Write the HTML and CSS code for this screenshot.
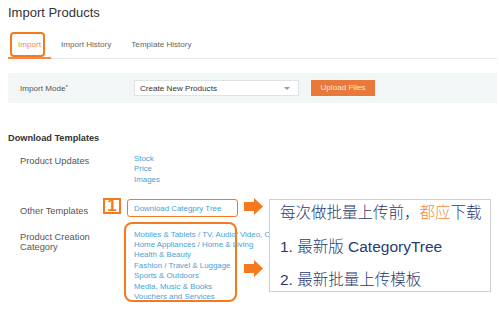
FILE: index.html
```html
<!DOCTYPE html>
<html lang="en">
<head>
  <meta charset="UTF-8">
  <meta name="viewport" content="width=device-width, initial-scale=1.0">
  <title>Import Products</title>
  <link rel="stylesheet" href="styles.css">
</head>
<body>

  <h1>Import Products</h1>

  <div class="tabs">
    <div class="tab active">Import</div>
    <div class="tab">Import History</div>
    <div class="tab">Template History</div>
  </div>

  <div class="mode-panel">
    <div class="mode-label">Import Mode<sup>*</sup></div>
    <div class="select">
      <span>Create New Products</span>
      <span class="caret"></span>
    </div>
    <div class="btn-upload">Upload Files</div>
  </div>

  <h2>Download Templates</h2>

  <div class="tpl-row">
    <div class="tpl-label">Product Updates</div>
    <div class="tpl-links">
      <a href="#">Stock</a>
      <a href="#">Price</a>
      <a href="#">Images</a>
    </div>
  </div>

  <div class="tpl-row">
    <div class="tpl-label">Other Templates</div>
    <div class="tpl-links">
      <a href="#">Download Categpry Tree</a>
    </div>
  </div>

  <div class="tpl-row category">
    <div class="tpl-label">Product Creation<br>Category</div>
    <div class="tpl-links">
      <a href="#">Mobiles &amp; Tablets / TV, Audio/ Video, Cameras</a>
      <a href="#">Home Appliances / Home &amp; Living</a>
      <a href="#">Health &amp; Beauty</a>
      <a href="#">Fashion / Travel &amp; Luggage</a>
      <a href="#">Sports &amp; Outdoors</a>
      <a href="#">Media, Music &amp; Books</a>
      <a href="#">Vouchers and Services</a>
    </div>
  </div>

  <!-- Markierungen -->
  <div class="mark mark-tab"></div>
  <div class="mark mark-num">1</div>
  <div class="mark mark-tree"></div>
  <div class="mark mark-list"></div>

  <svg class="arrow arrow-1" viewBox="0 0 19 17"><polygon points="0,4 10,4 10,0 19,8.5 10,17 10,13 0,13" fill="#f47a20"/></svg>
  <svg class="arrow arrow-2" viewBox="0 0 19 17"><polygon points="0,4 10,4 10,0 19,8.5 10,17 10,13 0,13" fill="#f47a20"/></svg>

  <div class="note">
    <div>每次做批量上传前，<span class="hl">都应</span>下载</div>
    <div>1. 最新版 CategoryTree</div>
    <div>2. 最新批量上传模板</div>
  </div>

</body>
</html>
```

FILE: styles.css
```css
body {
  font-family: "Liberation Sans", Arial, sans-serif;
  margin: 0;
  padding: 0 2px 0 8px;
  background-color: #fff;
  color: #444;
  position: relative;
}

h1 {
  font-size: 13px;
  font-weight: normal;
  line-height: 16px;
  margin: 5px 0 0;
  color: #333;
}

.tabs {
  display: flex;
  margin-top: 14px;
  border-bottom: 1px solid #e6e6e6;
}

.tab {
  font-size: 8.1px;
  line-height: 10px;
  padding: 5px 10px 8px;
  color: #666;
}

.tab.active {
  color: #f0894a;
  border-bottom: 2px solid #f0894a;
  margin-bottom: -1px;
  padding-bottom: 7px;
}

.mode-panel {
  display: flex;
  align-items: center;
  height: 30px;
  margin-top: 14px;
  background-color: #f3f6f7;
  font-size: 8.1px;
}

.mode-label {
  width: 114px;
  padding-left: 12px;
  color: #555;
}

.mode-label sup {
  font-size: 6px;
  vertical-align: top;
}

.select {
  display: flex;
  align-items: center;
  justify-content: space-between;
  box-sizing: border-box;
  width: 165px;
  height: 16px;
  padding: 0 5px;
  background-color: #fff;
  border: 1px solid #dfe3e6;
  color: #333;
}

.caret {
  width: 0;
  height: 0;
  margin-right: 3px;
  border-left: 3px solid transparent;
  border-right: 3px solid transparent;
  border-top: 3px solid #999;
}

.btn-upload {
  width: 64px;
  height: 16px;
  line-height: 16px;
  margin-left: 12px;
  text-align: center;
  background-color: #e8793b;
  color: #fbe6da;
}

h2 {
  font-size: 9.2px;
  line-height: 12px;
  margin: 29px 0 0;
  color: #333;
}

.tpl-row {
  display: grid;
  grid-template-columns: 126px 1fr;
  margin-top: 19px;
}

h2 + .tpl-row {
  margin-top: 10px;
}

.tpl-row.category {
  margin-top: 13px;
}

.tpl-label {
  padding: 2px 0 0 12px;
  font-size: 9.3px;
  line-height: 10.4px;
  color: #555;
}

.tpl-links {
  display: flex;
  flex-direction: column;
  font-size: 7.9px;
  line-height: 10.4px;
  white-space: nowrap;
}

.tpl-links a {
  color: #4a9fd4;
  text-decoration: none;
}

.mark {
  position: absolute;
  box-sizing: border-box;
  border: 2px solid #f47a20;
}

.mark-tab {
  left: 10px;
  top: 32px;
  width: 35px;
  height: 25px;
  border-radius: 4px;
}

.mark-num {
  left: 103px;
  top: 198px;
  width: 18px;
  height: 16px;
  font-size: 17px;
  font-weight: bold;
  line-height: 12px;
  text-align: center;
  color: #f47a20;
}

.mark-tree {
  left: 127px;
  top: 199px;
  width: 111px;
  height: 18px;
  border-width: 1.5px;
  border-radius: 3px;
}

.mark-list {
  left: 124px;
  top: 222px;
  width: 113px;
  height: 80px;
  border-radius: 8px;
}

.arrow {
  position: absolute;
  left: 244px;
  width: 19px;
  height: 17px;
}

.arrow-1 {
  top: 198px;
}

.arrow-2 {
  top: 260px;
}

.note {
  position: absolute;
  left: 269px;
  top: 199px;
  width: 222px;
  height: 93px;
  box-sizing: border-box;
  padding: 4px 0 0 10px;
  display: flex;
  flex-direction: column;
  gap: 15.5px;
  background-color: #fff;
  border: 1px solid #d0d0d0;
  font-family: "Liberation Sans", "Noto Sans CJK SC", sans-serif;
  font-size: 15.5px;
  font-weight: 300;
  line-height: 18px;
  color: #2a3b70;
  white-space: nowrap;
}

.note .hl {
  color: #f5893a;
}
```
